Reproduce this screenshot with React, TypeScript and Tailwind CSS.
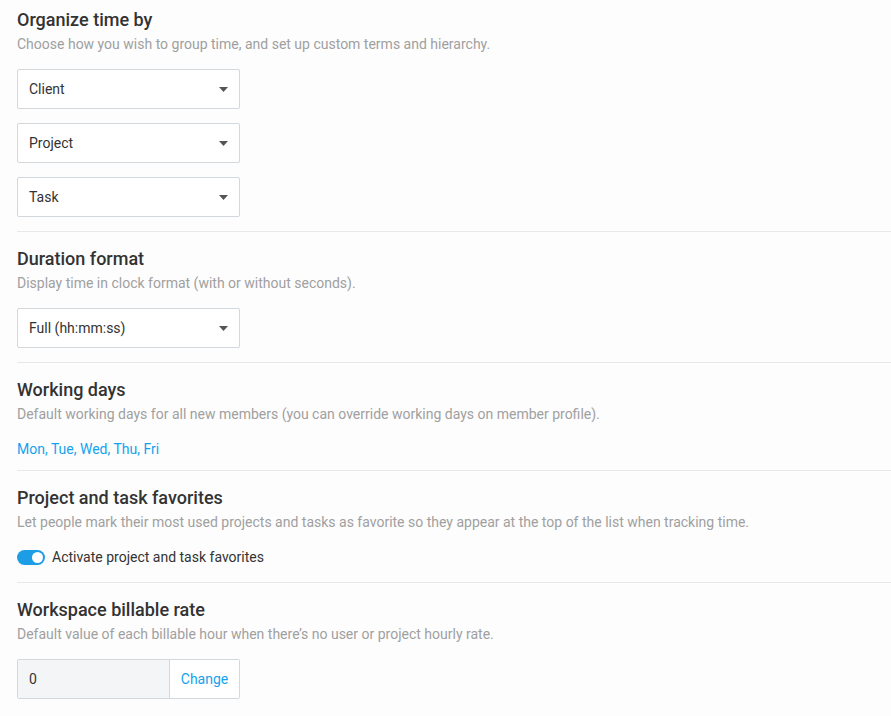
import React from 'react';

function Caret() {
  return (
    <svg width="9" height="5" viewBox="0 0 9 5" className="shrink-0">
      <path d="M0 0h9L4.5 5z" fill="#555" />
    </svg>
  );
}

function SelectBox({ label }: { label: string }) {
  return (
    <div className="flex h-10 w-[223px] items-center justify-between rounded-[2px] border border-[#d3d8dd] bg-white pl-[11px] pr-[11px] text-[14px] text-[#333]">
      <span>{label}</span>
      <Caret />
    </div>
  );
}

function Section({
  title,
  description,
  children,
  first = false,
  className = '',
}: {
  title: string;
  description: string;
  children: React.ReactNode;
  first?: boolean;
  className?: string;
}) {
  return (
    <section className={`${first ? 'pt-2' : 'border-t border-[#e6e8ea] pt-[15px]'} ${className}`}>
      <h2 className="text-[18px] font-medium leading-6 text-[#333]">{title}</h2>
      <p className="text-[14px] leading-6 text-[#a0a0a0]">{description}</p>
      <div className="mt-[13px] leading-5">{children}</div>
    </section>
  );
}

export default function App() {
  return (
    <div
      className="min-h-[716px] bg-[#fdfdfd] pl-[17px]"
      style={{ fontFamily: 'Roboto, "Liberation Sans", sans-serif' }}
    >
      <Section
        first
        className="pb-[14px]"
        title="Organize time by"
        description="Choose how you wish to group time, and set up custom terms and hierarchy."
      >
        <div className="flex flex-col gap-[14px]">
          <SelectBox label="Client" />
          <SelectBox label="Project" />
          <SelectBox label="Task" />
        </div>
      </Section>

      <Section
        className="pb-[14px]"
        title="Duration format"
        description="Display time in clock format (with or without seconds)."
      >
        <SelectBox label="Full (hh:mm:ss)" />
      </Section>

      <Section
        className="pb-[11px]"
        title="Working days"
        description="Default working days for all new members (you can override working days on member profile)."
      >
        <a className="block text-[14px] leading-5 text-[#13a3ee]">Mon, Tue, Wed, Thu, Fri</a>
      </Section>

      <Section
        className="pb-[15px]"
        title="Project and task favorites"
        description="Let people mark their most used projects and tasks as favorite so they appear at the top of the list when tracking time."
      >
        <label className="flex h-5 items-center gap-[7px] text-[14px] text-[#333]">
          <span className="relative inline-block h-[15px] w-[28px] rounded-full bg-[#1d9de6]">
            <span className="absolute right-[2px] top-[2px] h-[11px] w-[11px] rounded-full bg-white" />
          </span>
          Activate project and task favorites
        </label>
      </Section>

      <Section
        className="pb-4"
        title="Workspace billable rate"
        description="Default value of each billable hour when there’s no user or project hourly rate."
      >
        <div className="flex h-10 w-[223px] overflow-hidden rounded-[2px] border border-[#d3d8dd]">
          <div className="flex flex-1 items-center bg-[#f3f5f7] pl-[11px] text-[14px] text-[#333]">0</div>
          <button className="w-[70px] border-l border-[#d3d8dd] bg-white text-[14px] text-[#13a3ee]">
            Change
          </button>
        </div>
      </Section>
    </div>
  );
}
